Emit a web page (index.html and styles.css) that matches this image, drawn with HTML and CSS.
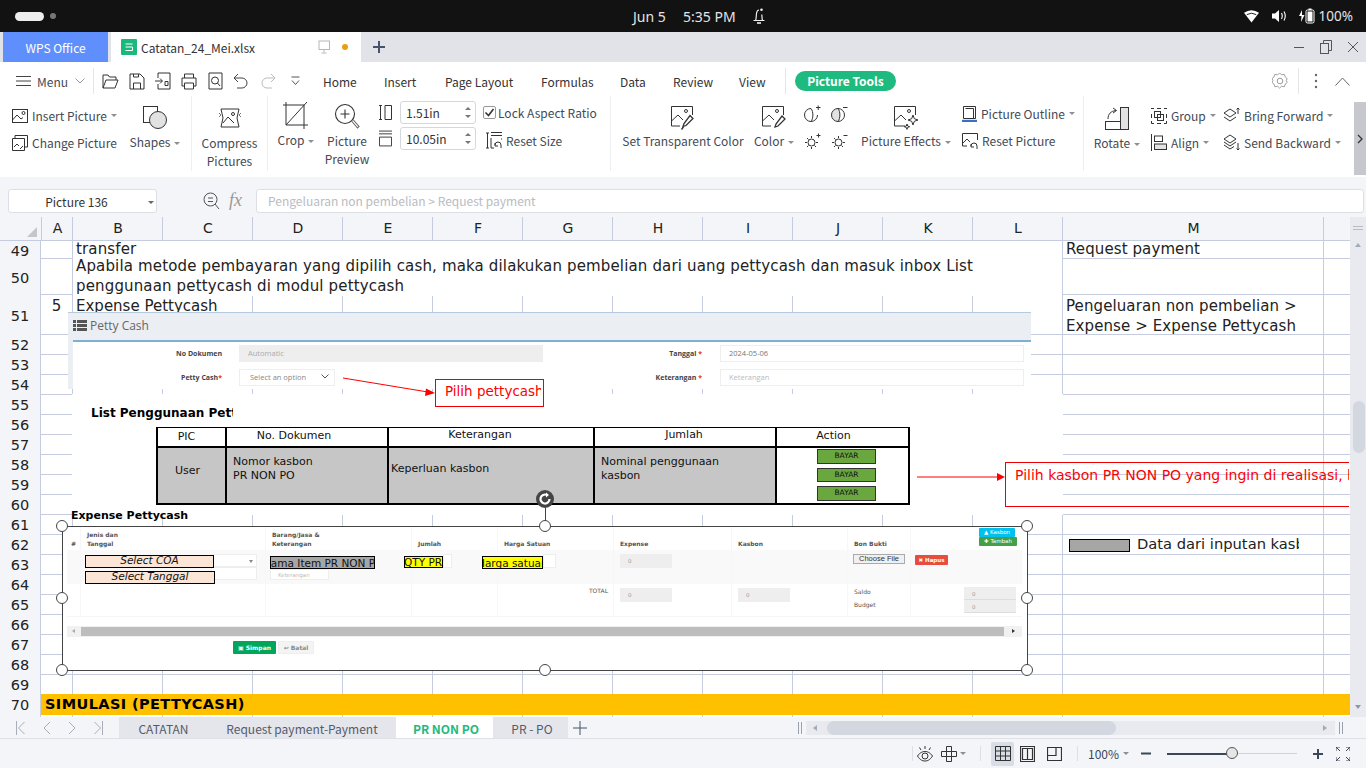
FILE: index.html
```html
<!DOCTYPE html>
<html lang="en">
<head>
    <meta charset="UTF-8">
    <title>Catatan_24_Mei.xlsx - WPS Office</title>
    <link rel="stylesheet" href="styles.css">
</head>
<body>
    <!-- System top bar -->
    <div class="topbar">
        <div class="top-left"><span class="pill"></span><span class="dot"></span></div>
        <span class="top-date">Jun 5</span>
        <span class="top-time">5:35 PM</span>
        <svg class="bell" width="14" height="18" viewBox="0 0 14 18" fill="none" stroke="#eee" stroke-width="1.2"><path d="M1.5 13.5h11M3.5 13.5c1-2 .6-4.5 1-7 .3-2 1.3-3.5 2.500-3.5M10.5 13.5c-.6-2-.5-4-.7-6"/><path d="M5 16h4" stroke-width="1.6"/><circle cx="9.5" cy="2.8" r="1.3" fill="#eee" stroke="none"/></svg>
        <div class="top-right">
            <svg width="15" height="14" viewBox="0 0 16 14"><path d="M0 3.5 Q8 -2 16 3.5 L8 14Z" fill="#fff"/><path d="M3 5.5 Q8 2.5 13 5.5" fill="none" stroke="#121212" stroke-width="1"/></svg>
            <svg class="t-vol" width="15" height="14" viewBox="0 0 15 14"><path d="M0 4.5h3L7 1v12L3 9.5H0z" fill="#fff"/><path d="M9.5 4q1.5 3 0 6M12 2.5q2.5 4.500 0 9" stroke="#fff" fill="none" stroke-width="1.1"/></svg>
            <svg class="t-bat" width="16" height="16" viewBox="0 0 16 16"><path d="M3 2 0 8h2.5L2 14l3.500-7H3z" fill="#fff"/><rect x="7" y="2" width="8" height="13" rx="1.5" fill="none" stroke="#fff"/><rect x="8.5" y="3.5" width="5" height="10" fill="#fff"/><rect x="9.5" y="0.5" width="3" height="1.5" fill="#fff"/></svg>
            <span>100%</span>
        </div>
    </div>

    <!-- App tabs -->
    <div class="apptabs">
        <div class="tab-wps">WPS Office</div>
        <div class="tab-doc">
            <svg width="16" height="16" viewBox="0 0 16 16"><rect width="16" height="16" rx="1" fill="#19b97e"/><path d="M4.5 5h7M4.5 8h7v3.5h-7" fill="none" stroke="#fff" stroke-width="1"/></svg>
            <span class="doc-name">Catatan_24_Mei.xlsx</span>
            <svg class="doc-mon" width="13" height="14" viewBox="0 0 13 14" fill="none" stroke="#b4b8c0"><rect x="1" y="1" width="10.5" height="8.5"/><path d="M6 9.5v3M3.5 13h5"/></svg>
            <span class="doc-dot"></span>
        </div>
        <svg class="tab-add" width="14" height="14" viewBox="0 0 14 14" stroke="#45526b" stroke-width="2"><path d="M7 1v12M1 7h12"/></svg>
        <div class="winctl">
            <svg width="12" height="12" viewBox="0 0 12 12" stroke="#555" fill="none"><path d="M1 6.5h10"/></svg>
            <svg width="12" height="14" viewBox="0 0 12 14" stroke="#555" fill="none"><rect x="0.5" y="3.5" width="8" height="10"/><path d="M3.5 3.5v-3h8v10h-3"/></svg>
            <svg width="12" height="12" viewBox="0 0 12 12" stroke="#555" fill="none"><path d="M1 1l10 10M11 1 1 11"/></svg>
        </div>
    </div>

    <!-- Menu row -->
    <div class="menurow">
        <svg class="m-burger" width="15" height="12" viewBox="0 0 15 12" stroke="#444" fill="none"><path d="M0 1.5h15M0 6h15M0 10.5h15"/></svg>
        <span class="m-label">Menu</span>
        <svg class="m-chev" width="10" height="6" viewBox="0 0 10 6" stroke="#999" fill="none"><path d="M.5.5 5 5 9.5.5"/></svg>
        <span class="m-sep"></span>
        <div class="quick">
            <svg width="17" height="17" viewBox="0 0 17 17" fill="none" stroke="#333"><path d="M1 15V2h5l1.5 2H14v3M1 15l3-8h12l-3 8z"/></svg>
            <svg width="16" height="17" viewBox="0 0 16 17" fill="none" stroke="#333"><path d="M1 1h10l4 4v11H1zM4.5 16v-6h7v6M4.5 1v3h5V1"/></svg>
            <svg width="16" height="18" viewBox="0 0 16 18" fill="none" stroke="#333"><path d="M3 1h12v16H3v-5M3 6V1M0 9h7M5 6.5 7.500 9 5 11.5M10 9.5h3v4h-3z"/></svg>
            <svg width="16" height="17" viewBox="0 0 16 17" fill="none" stroke="#333"><path d="M3.5 5V1h9v4M3.5 13H1V5h14v8h-2.5M3.5 10h9v6h-9z"/></svg>
            <svg class="q5" width="15" height="18" viewBox="0 0 15 18" fill="none" stroke="#333"><path d="M1 1h13v16H1z"/><circle cx="7" cy="8.5" r="3.5"/><path d="M9.5 11l2.5 3"/></svg>
            <svg width="15" height="16" viewBox="0 0 15 16" fill="none" stroke="#444"><path d="M5 1 1 5l4 4M1 5h8a5 5 0 0 1 0 10H4"/></svg>
            <svg class="q7" width="15" height="16" viewBox="0 0 15 16" fill="none" stroke="#bbb"><path d="M10 1l4 4-4 4M14 5H6a5 5 0 0 0 0 10h5"/></svg>
            <svg class="q8" width="9" height="10" viewBox="0 0 9 10" fill="none" stroke="#555"><path d="M.5 1h8M1 4.5l3.500 4 3.500-4"/></svg>
        </div>
        <nav class="mainmenu">
            <span class="mm-home">Home</span><span class="mm-insert">Insert</span><span class="mm-page">Page Layout</span><span class="mm-form">Formulas</span><span class="mm-data">Data</span><span class="mm-review">Review</span><span class="mm-view">View</span>
        </nav>
        <span class="m-sep2"></span>
        <span class="tools-pill">Picture Tools</span>
        <div class="menu-right">
            <svg width="16" height="18" viewBox="0 0 16 18" fill="none" stroke="#9a9a9a"><path d="M8 1l2 2 3-.5 1 2.900 2 1.600-1 2 1 2-2 1.600-1 2.900-3-.5-2 2-2-2-3 .5-1-2.900-2-1.600 1-2-1-2 2-1.600 1-2.900 3 .5z" transform="scale(.95)"/><circle cx="8" cy="9" r="2.8"/></svg>
            <span class="mr-sep"></span>
            <svg class="mr-dots" width="4" height="16" viewBox="0 0 4 16" fill="#666"><circle cx="2" cy="2" r="1.2"/><circle cx="2" cy="8" r="1.2"/><circle cx="2" cy="14" r="1.2"/></svg>
            <svg class="mr-up" width="15" height="9" viewBox="0 0 15 9" fill="none" stroke="#666"><path d="M.5 8.5 7.500 1l7 7.5"/></svg>
        </div>
    </div>

    <!-- Ribbon -->
    <div class="ribbon">
        <div class="rgroup g1">
            <div class="smalls">
                <div class="sbtn">
                    <svg width="16" height="14" viewBox="0 0 16 14" fill="none" stroke="#333"><rect x=".5" y=".5" width="15" height="13"/><path d="M.5 11 5 6l4 4 2-1.5"/><circle cx="11.5" cy="4" r="1.5"/></svg>
                    <span>Insert Picture</span><i class="caret"></i>
                </div>
                <div class="sbtn">
                    <svg width="16" height="16" viewBox="0 0 16 16" fill="none" stroke="#333"><path d="M3 3V.5h12.500V12H13M.5 3.500h12v12H.5zM2 12l3-3 2 2M8 14l3-3"/></svg>
                    <span>Change Picture</span>
                </div>
            </div>
            <div class="bigbtn shapes">
                <svg width="25" height="25" viewBox="0 0 25 25" fill="none" stroke="#333"><rect x=".5" y=".5" width="14" height="16" fill="#fff"/><circle cx="15" cy="14" r="8.5" fill="#e2e2e2"/></svg>
                <span>Shapes<i class="caret"></i></span>
            </div>
        </div>
        <div class="rgroup g2">
            <div class="bigbtn">
                <svg width="22" height="20" viewBox="0 0 22 20" fill="none" stroke="#333"><path d="M2 1h18l-2 9 2 9H2l2-9z"/><path d="M4 15 9 9l6 6" /><circle cx="14" cy="6" r="1.5"/><path d="M0 5l2 2-2 2M22 5l-2 2 2 2" stroke="#777"/></svg>
                <span>Compress<br>Pictures</span>
            </div>
        </div>
        <div class="rgroup g3">
            <div class="bigbtn crop">
                <svg width="26" height="30" viewBox="0 0 26 30" fill="none" stroke="#333"><path d="M3 4h18v20H3zM0 4h3M21 24h4M3 1v3M21 24v4M3 24 24 1"/></svg>
                <span>Crop<i class="caret"></i></span>
            </div>
            <div class="bigbtn preview">
                <svg width="26" height="28" viewBox="0 0 26 28" fill="none" stroke="#333" stroke-width="1.1"><circle cx="11" cy="11" r="9.5"/><path d="M11 6.5v9M6.5 11h9"/><path d="M17.5 18l6 7 1.500-1.500-6-7" stroke="#666"/></svg>
                <span>Picture<br>Preview</span>
            </div>
            <div class="sizes">
                <div class="size-row">
                    <svg width="13" height="15" viewBox="0 0 13 15" fill="none" stroke="#333"><path d="M0 .5h3M0 14.500h3M1.500 .5v14M6 .5h6.500v14H6z"/></svg>
                    <div class="spin"><span>1.51in</span><b class="spinner"><i class="up"></i><i class="down"></i></b></div>
                </div>
                <div class="size-row">
                    <svg width="14" height="17" viewBox="0 0 14 17" fill="none" stroke="#333"><path d="M0 .5h14M0 3.500h14M.5 7h13v9.500H.5z"/></svg>
                    <div class="spin"><span>10.05in</span><b class="spinner"><i class="up"></i><i class="down"></i></b></div>
                </div>
            </div>
            <div class="lock">
                <div class="lock-row">
                    <span class="check"><svg width="11" height="11" viewBox="0 0 11 11" fill="none" stroke="#333" stroke-width="1.6"><path d="M1.5 5.5 4.500 8.500 9.500 2"/></svg></span>
                    <span>Lock Aspect Ratio</span>
                </div>
                <div class="reset-row">
                    <svg width="16" height="17" viewBox="0 0 16 17" fill="none" stroke="#333"><path d="M0 1h3M0 16h3M1.500 1v15M5 .5h11M5 3.500h11M5 6v10h3M16 6v2"/><path d="M9 13a3 3 0 0 1 6 0v3M9 11v3h3" /></svg>
                    <span>Reset Size</span>
                </div>
            </div>
        </div>
        <div class="rgroup g4">
            <div class="bigbtn transp">
                <svg width="24" height="24" viewBox="0 0 24 24" fill="none" stroke="#333"><path d="M9 20H.5V.5h21V9"/><path d="M.5 15 7 9l5 5"/><circle cx="15" cy="5" r="1.5"/><path d="M19 9.500l3 3-7 7-3 1 1-3zM12.500 21l-2 2.500" stroke-width="1.3"/></svg>
                <span>Set Transparent Color</span>
            </div>
            <div class="bigbtn color">
                <svg width="24" height="24" viewBox="0 0 24 24" fill="none" stroke="#333"><path d="M9 20H.5V.5h21V9"/><path d="M.5 15 7 9l5 5"/><circle cx="15" cy="5" r="1.5"/><path d="M20 10l3 3-7 7-3 1 1-3z" stroke-width="1.3"/></svg>
                <span>Color<i class="caret"></i></span>
            </div>
            <div class="bright">
                <svg width="17" height="17" viewBox="0 0 17 17" fill="none" stroke="#333"><path d="M7 3.500a6.500 6.500 0 1 0 6.500 6.500"/><path d="M7 3.500c2.500 3 2.500 10 0 13"/><path d="M12 2.500h4.500M14.200 .5v4.500"/></svg>
                <svg width="17" height="17" viewBox="0 0 17 17" fill="none" stroke="#333"><path d="M7 3.500a6.500 6.500 0 0 0 0 13c2.500-3 2.500-10 0-13z" fill="#e2e2e2"/><path d="M7 3.500a6.500 6.500 0 0 1 6.500 6.500M13.500 10a6.500 6.500 0 0 1-6.500 6.500"/><path d="M12 2.500h4.500"/></svg>
                <svg width="17" height="17" viewBox="0 0 17 17" fill="none" stroke="#333"><circle cx="7.500" cy="9.500" r="3.500"/><path d="M7.500 3v2M7.500 14v2M1 9.500h2M12 9.500h2M3 5l1.500 1.500M3 14l1.500-1.500M12 14l-1.500-1.500M12.500 2.500h4M14.500 .5v4"/></svg>
                <svg width="17" height="17" viewBox="0 0 17 17" fill="none" stroke="#333"><circle cx="7.500" cy="9.500" r="3.500"/><path d="M7.500 3v2M7.500 14v2M1 9.500h2M12 9.500h2M3 5l1.500 1.500M3 14l1.500-1.500M12 14l-1.500-1.500M12.500 2.500h4"/></svg>
            </div>
            <div class="bigbtn effects">
                <svg width="24" height="24" viewBox="0 0 24 24" fill="none" stroke="#333"><path d="M11 20H.5V.5h21V9"/><path d="M.5 15 7 9l5 5"/><circle cx="15" cy="5" r="1.5"/><path d="M19 9l1.300 3.700L24 14l-3.700 1.300L19 19l-1.300-3.700L14 14l3.700-1.300zM13 18l.7 2 2 .7-2 .7-.7 2-.7-2-2-.7 2-.7z"/></svg>
                <span>Picture Effects<i class="caret"></i></span>
            </div>
            <div class="smalls outline">
                <div class="sbtn">
                    <svg width="15" height="16" viewBox="0 0 15 16" fill="none" stroke="#333"><path d="M1.500.5h12v12h-12zM3.500 2.500h8v10"/><path d="M0 15h15" stroke="#3a6fc8" stroke-width="2.4"/></svg>
                    <span>Picture Outline</span><i class="caret"></i>
                </div>
                <div class="sbtn">
                    <svg width="16" height="16" viewBox="0 0 16 16" fill="none" stroke="#333"><path d="M5 13H.5V.5h15V7"/><path d="M1 10l4-4 3 3M9 13a3 3 0 0 1 6 0v3M9 11v3h3" /></svg>
                    <span>Reset Picture</span>
                </div>
            </div>
        </div>
        <div class="rgroup g5">
            <div class="bigbtn rotate">
                <svg width="24" height="23" viewBox="0 0 24 23" fill="none" stroke="#333"><rect x=".5" y="14.5" width="15" height="8"/><rect x="15.5" y=".5" width="8" height="22" fill="#e2e2e2"/><path d="M3 12C3 7 6 4 11 3.500M8 1l3.500 2.500L8 6"/></svg>
                <span>Rotate<i class="caret"></i></span>
            </div>
            <div class="smalls arrange">
                <div class="sbtn">
                    <svg width="16" height="16" viewBox="0 0 16 16" fill="none" stroke="#333"><path d="M0 .5h3M6 .5h4M13 .5h3M.5 6v4M15.500 6v4M.5 13v2.500h2.500M13 15.500h2.500V13M6 15.500h4" /><rect x="3.500" y="3.500" width="6" height="6"/><rect x="6.500" y="6.500" width="6" height="6"/></svg>
                    <span>Group</span><i class="caret"></i>
                </div>
                <div class="sbtn">
                    <svg width="16" height="17" viewBox="0 0 16 17" fill="none" stroke="#333"><path d="M.5 0v17"/><rect x="3.500" y="2" width="8" height="5.5"/><rect x="3.500" y="10" width="12" height="5.5" fill="#e2e2e2"/></svg>
                    <span>Align</span><i class="caret"></i>
                </div>
            </div>
            <div class="smalls arrange2">
                <div class="sbtn">
                    <svg width="17" height="17" viewBox="0 0 17 17" fill="none" stroke="#333"><path d="M7 2 13 6l-6 4L1 6zM1 10l6 4 6-4M15 1v6M13.500 2.500 15 1l1.500 1.500"/></svg>
                    <span>Bring Forward</span><i class="caret"></i>
                </div>
                <div class="sbtn">
                    <svg width="17" height="17" viewBox="0 0 17 17" fill="none" stroke="#333"><path d="M7 1l6 4-6 4-6-4zM1 8l6 4 6-4M1 11l6 4 4-2.500M15 9v7M13.500 14.500 15 16l1.500-1.500"/></svg>
                    <span>Send Backward</span><i class="caret"></i>
                </div>
            </div>
        </div>
        <div class="ribbon-more"><svg width="6" height="10" viewBox="0 0 6 10" fill="none" stroke="#333" stroke-width="1.3"><path d="M1 1l4 4-4 4"/></svg></div>
    </div>

    <!-- Formula bar -->
    <div class="formulabar">
        <div class="namebox"><span>Picture 136</span><i class="caret dark"></i></div>
        <svg class="fb-zoom" width="17" height="18" viewBox="0 0 17 18" fill="none" stroke="#555"><circle cx="7.5" cy="7.5" r="6.5"/><path d="M5 6h5M5 9.500h5M12 12l4 5"/></svg>
        <span class="fx">fx</span>
        <div class="fb-input">Pengeluaran non pembelian &gt; Request payment</div>
    </div>

    <!-- Sheet -->
    <div class="sheetwrap">
        <div class="sheet">
            <div class="colhead">
                <span class="corner"></span><span>A</span><span>B</span><span>C</span><span>D</span><span>E</span><span>F</span><span>G</span><span>H</span><span>I</span><span>J</span><span>K</span><span>L</span><span>M</span><span></span>
            </div>
            <div class="row r18"><span class="rh">49</span><span class="merged">transfer</span><span class="mcol">Request payment</span></div>
            <div class="row r36"><span class="rh">50</span><span class="merged wrap"><span class="wrap-text">Apabila metode pembayaran yang dipilih cash, maka dilakukan pembelian dari uang pettycash dan masuk inbox List penggunaan pettycash di modul pettycash</span></span></div>
            <div class="row r40"><span class="rh">51</span><span class="acol">5</span><span class="merged2">Expense Pettycash</span><span class="mcol wrap">Pengeluaran non pembelian &gt; Expense &gt; Expense Pettycash</span></div>
            <div class="row"><span class="rh">52</span></div>
            <div class="row"><span class="rh">53</span></div>
            <div class="row"><span class="rh">54</span></div>
            <div class="row"><span class="rh">55</span></div>
            <div class="row"><span class="rh">56</span></div>
            <div class="row"><span class="rh">57</span></div>
            <div class="row"><span class="rh">58</span></div>
            <div class="row"><span class="rh">59</span></div>
            <div class="row"><span class="rh">60</span></div>
            <div class="row"><span class="rh">61</span></div>
            <div class="row"><span class="rh">62</span></div>
            <div class="row"><span class="rh">63</span></div>
            <div class="row"><span class="rh">64</span></div>
            <div class="row"><span class="rh">65</span></div>
            <div class="row"><span class="rh">66</span></div>
            <div class="row"><span class="rh">67</span></div>
            <div class="row"><span class="rh">68</span></div>
            <div class="row r69"><span class="rh">69</span></div>
            <div class="row r70"><span class="rh">70</span><span class="simulasi">SIMULASI (PETTYCASH)</span></div>
            <div class="row r71"><span class="rh"></span></div>
        </div>
        <div class="vscroll">
            <span class="vs-split"></span>
            <i class="vs-up"></i>
            <span class="vs-thumb"></span>
            <i class="vs-down"></i>
        </div>
    </div>

    <!-- Sheet tabs -->
    <div class="sheettabs">
        <div class="sheetnav">
            <svg width="10" height="14" viewBox="0 0 10 14" fill="none" stroke="#a8adb8"><path d="M.5 0v14M8.500 1 2.500 7l6 6"/></svg>
            <svg width="8" height="14" viewBox="0 0 8 14" fill="none" stroke="#a8adb8"><path d="M7 1 1 7l6 6"/></svg>
            <svg width="8" height="14" viewBox="0 0 8 14" fill="none" stroke="#a8adb8"><path d="M1 1l6 6-6 6"/></svg>
            <svg width="10" height="14" viewBox="0 0 10 14" fill="none" stroke="#a8adb8"><path d="M9.500 0v14M1.500 1l6 6-6 6"/></svg>
        </div>
        <div class="tablist">
            <span class="st st-cat">CATATAN</span><span class="st st-req">Request payment-Payment</span><span class="st st-active">PR NON PO</span><span class="st st-po">PR - PO</span>
        </div>
        <svg class="st-add" width="14" height="14" viewBox="0 0 14 14" stroke="#45526b"><path d="M7 0v14M0 7h14"/></svg>
        <span class="hs-mark first"></span>
        <div class="hscroll"><i class="hs-left"></i><span class="hs-thumb"></span><i class="hs-right"></i></div>
        <span class="hs-mark"></span>
    </div>

    <!-- Status bar -->
    <div class="statusbar">
        <span class="sb-sep"></span>
        <svg class="sb-eye" width="16" height="16" viewBox="0 0 16 16" fill="none" stroke="#333"><path d="M.5 10C3 6.500 5.500 5.500 8 5.500S13 6.500 15.500 10C13 14 10.500 15 8 15s-5-1-7.500-5z"/><circle cx="8" cy="10" r="3"/><path d="M8 0v3M2.500 1.500 4 4M13.500 1.500 12 4"/></svg>
        <svg class="sb-cross" width="16" height="16" viewBox="0 0 16 16" fill="none" stroke="#333"><path d="M5.500.5h5v5h5v5h-5v5h-5v-5h-5v-5h5zM5.500 5.500h5v5h-5z"/></svg>
        <i class="caret sb-caret"></i>
        <span class="sb-sep s2"></span>
        <span class="view-on"><svg width="16" height="15" viewBox="0 0 16 15" fill="none" stroke="#333"><path d="M.5.500h15v14H.5zM.5 5h15M.5 10h15M5.500.500v14M10.500.500v14"/></svg></span>
        <svg class="sb-page" width="15" height="16" viewBox="0 0 15 16" fill="none" stroke="#333" stroke-width="1.2"><path d="M.5.500h14v15H.5zM2.500 2.500h10v11h-10zM7.500 2.500v11"/></svg>
        <svg class="sb-break" width="15" height="14" viewBox="0 0 15 14" fill="none" stroke="#333" stroke-width="1.2"><path d="M.5.500h14v13H.5zM9 .5v8H.5"/></svg>
        <span class="sb-sep s3"></span>
        <span class="sb-zoom">100%</span><i class="caret sb-caret2"></i>
        <svg class="sb-minus" width="10" height="3" viewBox="0 0 10 3"><path d="M0 1.500h10" stroke="#3c4658" stroke-width="2"/></svg>
        <div class="slider"><span class="slider-on"></span><span class="slider-knob"></span></div>
        <svg class="sb-plus" width="10" height="10" viewBox="0 0 10 10" stroke="#3c4658" stroke-width="2"><path d="M5 0v10M0 5h10"/></svg>
        <svg class="sb-full" width="14" height="14" viewBox="0 0 14 14" fill="none" stroke="#3c4658"><path d="M0 4V0h4M0 0l4 4M10 0h4v4M14 0l-4 4M0 10v4h4M0 14l4-4M14 10v4h-4M14 14l-4-4"/></svg>
    </div>

    <!-- Pictures pasted on the sheet -->
    <div class="pic pettycash">
        <div class="pc-head">
            <svg width="14" height="11" viewBox="0 0 14 11" fill="#555"><path d="M0 0h3v3H0zM4 0h10v3H4zM0 4h3v3H0zM4 4h10v3H4zM0 8h3v3H0zM4 8h10v3H4z"/></svg>
            <span>Petty Cash</span>
        </div>
        <div class="pc-body">
            <div class="pc-side"></div>
            <div class="pc-form">
                <div class="pc-col">
                    <div class="pc-row"><label>No Dokumen</label><span class="pc-input off">Automatic</span></div>
                    <div class="pc-row"><label>Petty Cash<em>*</em></label><span class="pc-select">Select an option<svg width="8" height="5" viewBox="0 0 8 5" fill="none" stroke="#555"><path d="M.5.500 4 4 7.500.500"/></svg></span></div>
                </div>
                <div class="pc-col right">
                    <div class="pc-row"><label>Tanggal <em>*</em></label><span class="pc-input">2024-05-06</span></div>
                    <div class="pc-row"><label>Keterangan <em>*</em></label><span class="pc-input hint">Keterangan</span></div>
                </div>
            </div>
        </div>
    </div>

    <div class="pic listblock">
        <h3 class="list-title"><span>List Penggunaan Petty Cash</span></h3>
        <div class="list-table">
            <span class="lt-h h-pic">PIC</span><span class="lt-h h-doc">No. Dokumen</span><span class="lt-h h-ket">Keterangan</span><span class="lt-h h-jml">Jumlah</span><span class="lt-h h-act">Action</span>
            <span class="lt-c c-user">User</span><span class="lt-c">Nomor kasbon<br>PR NON PO</span><span class="lt-c c-ket">Keperluan kasbon</span><span class="lt-c">Nominal penggunaan<br>kasbon</span>
            <span class="lt-act"><b class="bayar">BAYAR</b><b class="bayar">BAYAR</b><b class="bayar">BAYAR</b></span>
        </div>
    </div>

    <svg class="pic arrows" width="1366" height="768" viewBox="0 0 1366 768" fill="none">
        <path d="M343 378 428 392" stroke="#f00"/>
        <path d="M435 393 426 388.500 425 396z" fill="#f00"/>
        <path d="M917 477H998" stroke="#f00"/>
        <path d="M1005 477 997 473v8z" fill="#f00"/>
    </svg>
    <div class="pic note-petty"><span>Pilih pettycash</span></div>
    <div class="pic note-kasbon"><div class="note-inner">Pilih kasbon PR NON PO yang ingin di realisasi, lalu klik tombol bayar</div></div>
    <div class="pic legend"><span class="legend-swatch"></span><span class="legend-text">Data dari inputan kasbon</span></div>

    <div class="pic exp-title">Expense Pettycash</div>
    <div class="pic expense">
        <div class="ex-table">
            <div class="ex-row ex-head">
                <span class="c0">#</span><span>Jenis dan<br>Tanggal</span><span>Barang/Jasa &amp;<br>Keterangan</span><span>Jumlah</span><span>Harga Satuan</span><span>Expense</span><span>Kasbon</span><span>Bon Bukti</span>
                <span class="ex-adds"><b class="btn-kasbon">▲ Kasbon</b><b class="btn-tambah">✚ Tambah</b></span>
            </div>
            <div class="ex-row ex-item">
                <span></span>
                <span class="ex-coa"><i class="inp sel"></i><i class="inp sel2"></i></span>
                <span class="ex-brg"><i class="inp ket">Keterangan</i></span>
                <span class="ex-qty"><i class="inp"></i></span>
                <span class="ex-hrg"><i class="inp"></i></span>
                <span><i class="inp off">0</i></span>
                <span></span>
                <span class="ex-file"><b class="choose">Choose File</b></span>
                <span class="ex-del"><b class="hapus">✖ Hapus</b></span>
            </div>
            <div class="ex-row ex-total">
                <span></span><span></span><span></span><span></span>
                <span class="total-lbl">TOTAL</span>
                <span><i class="inp off">0</i></span>
                <span><i class="inp off">0</i></span>
                <span class="ex-saldo">Saldo<br>Budget</span>
                <span class="ex-sum"><i class="inp off">0</i><i class="inp off">0</i></span>
            </div>
        </div>
        <div class="ex-scroll"><i class="es-l"></i><span class="es-thumb"></span><i class="es-r"></i></div>
        <div class="ex-actions"><b class="simpan">▣ Simpan</b><b class="batal">↩ Batal</b></div>

        <span class="mark coa">Select COA</span>
        <span class="mark tgl">Select Tanggal</span>
        <span class="mark item"><span>Nama Item PR NON PO</span></span>
        <span class="mark qty"><span>QTY PR</span></span>
        <span class="mark harga"><span>Harga satuan</span></span>

        <span class="handle h-tl"></span><span class="handle h-tc"></span><span class="handle h-tr"></span>
        <span class="handle h-ml"></span><span class="handle h-mr"></span>
        <span class="handle h-bl"></span><span class="handle h-bc"></span><span class="handle h-br"></span>
        <span class="rot-line"></span>
        <span class="rot-handle"><svg width="14" height="14" viewBox="0 0 14 14" fill="none" stroke="#fff" stroke-width="2.2"><path d="M11.500 7A4.500 4.500 0 1 1 9 3"/><path d="M8 .5 11 3 8 5.500z" fill="#fff" stroke="none"/></svg></span>
    </div>
</body>
</html>
```

FILE: styles.css
```css
/* Page */
* {
    box-sizing: border-box;
}

body {
    margin: 0;
    width: 1366px;
    height: 768px;
    overflow: hidden;
    background-color: #f3f5f8;
    font-family: "Noto Sans CJK SC", "Noto Sans", sans-serif;
    font-size: 12px;
    color: #444a55;
}

svg {
    display: block;
    flex: none;
}

i, em {
    font-style: normal;
}

.caret {
    display: inline-block;
    width: 0;
    height: 0;
    margin-left: 4px;
    border-left: 3px solid transparent;
    border-right: 3px solid transparent;
    border-top: 3px solid #8a8f98;
    vertical-align: middle;
}

.caret.dark {
    border-top-color: #666;
}

/* System top bar */
.topbar {
    height: 32px;
    background-color: #121212;
    color: #e4e4e4;
    display: flex;
    align-items: center;
    font-family: "Noto Sans", sans-serif;
    font-size: 14px;
}

.top-left {
    width: 633px;
    padding-left: 15px;
    display: flex;
    align-items: center;
    gap: 6px;
}

.pill {
    width: 29px;
    height: 9px;
    border-radius: 5px;
    background-color: #eee;
}

.dot {
    width: 6px;
    height: 6px;
    border-radius: 50%;
    background-color: #777;
}

.top-date {
    width: 50px;
}

.top-time {
    width: 69px;
}

.top-right {
    margin-left: auto;
    display: flex;
    align-items: center;
    padding-right: 13px;
    font-size: 13.5px;
}

.t-vol {
    margin-left: 13px;
}

.t-bat {
    margin: 0 4px 0 12px;
}

/* App tabs */
.apptabs {
    height: 30px;
    background-color: #e1e3e8;
    display: flex;
    align-items: center;
    padding-left: 3px;
}

.tab-wps {
    width: 105px;
    height: 30px;
    line-height: 32px;
    text-align: center;
    background-color: #5f8ffc;
    color: #fff;
}

.tab-doc {
    width: 250px;
    height: 30px;
    margin-left: 3px;
    background-color: #fff;
    display: flex;
    align-items: center;
    padding-left: 10px;
    color: #333;
}

.doc-name {
    width: 177px;
    margin-left: 4px;
    padding-top: 1px;
}

.doc-dot {
    width: 6px;
    height: 6px;
    margin-left: 11px;
    border-radius: 50%;
    background-color: #e8a010;
}

.tab-add {
    margin-left: 11px;
}

.winctl {
    margin-left: auto;
    display: flex;
    align-items: center;
    gap: 15px;
    padding-right: 7px;
}

/* Menu row */
.menurow {
    height: 34px;
    padding-top: 4px;
    background-color: #fff;
    display: flex;
    align-items: center;
    padding-left: 16px;
    position: relative;
}

.m-label {
    margin-left: 6px;
    width: 36px;
}

.m-chev {
    margin-left: 2px;
}

.m-sep {
    width: 1px;
    height: 26px;
    margin-left: 8px;
    background-color: #e4e6ea;
}

.quick {
    display: flex;
    align-items: center;
    width: 200px;
    margin-left: 8px;
    gap: 10px;
}

.q5 {
    margin-left: 1px;
}

.q7 {
    margin-left: 3px;
}

.q8 {
    margin-left: 5px;
}

.mainmenu {
    display: flex;
    margin-left: 21px;
    color: #333;
}

.mm-home { width: 61px; }
.mm-insert { width: 61px; }
.mm-page { width: 96px; }
.mm-form { width: 79px; }
.mm-data { width: 53px; }
.mm-review { width: 66px; }
.mm-view { width: 46px; }

.m-sep2 {
    width: 1px;
    height: 26px;
    background-color: #e4e6ea;
}

.tools-pill {
    margin-left: 9px;
    width: 101px;
    height: 20px;
    line-height: 19px;
    border-radius: 10px;
    text-align: center;
    background-color: #1fba7f;
    color: #fff;
    font-weight: 700;
}

.menu-right {
    margin-left: auto;
    display: flex;
    align-items: center;
    padding-right: 16px;
}

.mr-sep {
    width: 1px;
    height: 26px;
    margin: 0 15px 0 10px;
    background-color: #e4e6ea;
}

.mr-up {
    margin-left: 17px;
}

/* Ribbon */
.ribbon {
    height: 81px;
    background-color: #fff;
    display: flex;
    color: #444a55;
}

.rgroup {
    height: 75px;
    display: flex;
    flex: none;
    border-right: 1px solid #eceef1;
}

.g1 { width: 192px; padding-left: 12px; }
.g2 { width: 76px; }
.g3 { width: 343px; }
.g4 { width: 473px; }
.g5 { width: 265px; border-right: none; }

.smalls {
    display: flex;
    flex-direction: column;
    padding-top: 6px;
}

.sbtn {
    height: 27px;
    display: flex;
    align-items: center;
    white-space: nowrap;
}

.sbtn span {
    margin-left: 4px;
}

.bigbtn {
    display: flex;
    flex-direction: column;
    align-items: center;
    text-align: center;
    line-height: 18px;
    white-space: nowrap;
}

.bigbtn svg {
    margin-top: 10px;
    margin-bottom: 2px;
}

.g1 .smalls {
    width: 132px;
}

.shapes {
    width: 40px;
    margin-left: -9px;
}

.shapes svg {
    margin-bottom: 2px;
}

.g2 .bigbtn {
    width: 76px;
}

.g2 .bigbtn svg {
    margin-top: 12px;
    margin-bottom: 6px;
}

.crop {
    width: 50px;
    margin-left: 3px;
}

.crop svg {
    margin-top: 5px;
    margin-bottom: 0;
}

.preview {
    width: 50px;
    margin-left: 1px;
}

.preview svg {
    margin-top: 7px;
    margin-bottom: 1px;
}

.sizes {
    display: flex;
    flex-direction: column;
    margin-left: 7px;
    padding-top: 5px;
    gap: 3px;
}

.size-row {
    display: flex;
    align-items: center;
    height: 23px;
    width: 97px;
    gap: 8px;
}

.size-row svg {
    width: 13px;
}

.spin {
    width: 76px;
    height: 23px;
    border: 1px solid #d4d7dc;
    border-radius: 3px;
    display: flex;
    align-items: center;
    justify-content: space-between;
    padding: 0 4px 0 5px;
    color: #333;
}

.spinner {
    display: flex;
    flex-direction: column;
    gap: 5px;
}

.spinner i {
    width: 0;
    height: 0;
    border-left: 3px solid transparent;
    border-right: 3px solid transparent;
}

.spinner .up {
    border-bottom: 3px solid #777;
}

.spinner .down {
    border-top: 3px solid #777;
}

.lock {
    margin-left: 7px;
    padding-top: 6px;
}

.lock-row {
    height: 21px;
    display: flex;
    align-items: center;
    white-space: nowrap;
}

.lock-row span:last-child {
    margin-left: 2px;
}

.check {
    width: 13px;
    height: 13px;
    border: 1px solid #999;
    border-radius: 2px;
    display: flex;
    align-items: center;
    justify-content: center;
}

.reset-row {
    margin-top: 5px;
    margin-left: 3px;
    height: 24px;
    display: flex;
    align-items: center;
    gap: 4px;
}

.transp {
    width: 122px;
    margin-left: 11px;
}

.color {
    width: 38px;
    margin-left: 11px;
}

.bright {
    width: 54px;
    margin-left: 11px;
    display: grid;
    grid-template-columns: 27px 27px;
    grid-auto-rows: 28px;
    padding-top: 3px;
    align-items: center;
}

.effects {
    width: 92px;
    margin-left: 2px;
}

.outline {
    margin-left: 10px;
    padding-top: 4px;
}

.outline .sbtn {
    height: 27px;
}

.rotate {
    width: 50px;
    margin-left: 8px;
}

.rotate svg {
    margin-top: 11px;
    margin-bottom: 4px;
}

.arrange {
    margin-left: 9px;
    width: 73px;
}

.arrange2 {
    margin-left: -1px;
}

.ribbon-more {
    width: 12px;
    height: 73px;
    margin: 6px 0 0 5px;
    background-color: #c6c8cd;
    display: flex;
    align-items: center;
    justify-content: center;
}

/* Formula bar */
.formulabar {
    height: 40px;
    display: flex;
    align-items: flex-start;
    padding: 12px 2px 0 8px;
    background-color: #f3f5f8;
}

.namebox {
    width: 149px;
    height: 24px;
    border: 1px solid #dcdfe4;
    border-radius: 3px;
    background-color: #fff;
    display: flex;
    align-items: center;
    justify-content: center;
    padding-right: 12px;
    position: relative;
    color: #333;
}

.namebox .caret {
    position: absolute;
    right: 2px;
    top: 11px;
}

.fb-zoom {
    margin: 3px 0 0 46px;
}

.fx {
    width: 27px;
    margin-left: 9px;
    color: #999;
    font-family: "Liberation Serif", serif;
    font-style: italic;
    font-size: 18px;
    line-height: 22px;
}

.fb-input {
    flex: 1;
    height: 24px;
    line-height: 22px;
    border: 1px solid #dcdfe4;
    border-radius: 3px;
    background-color: #fff;
    padding-left: 11px;
    color: #b9bcc2;
}

/* Sheet grid */
.sheetwrap {
    height: 500px;
    display: flex;
    font-family: "DejaVu Sans", sans-serif;
    font-size: 15px;
    color: #222;
}

.sheet {
    width: 1350px;
    height: 500px;
    overflow: hidden;
}

.colhead,
.row {
    display: grid;
    grid-template-columns: 41px 31px repeat(11, 90px) 261px 27px;
}

.colhead {
    height: 24px;
    border-bottom: 1px solid #c5cce0;
    background-color: #f3f5f8;
    font-size: 14px;
    line-height: 23px;
}

.colhead span {
    text-align: center;
    padding-left: 1px;
    border-left: 1px solid #c5cce0;
}

.colhead .corner {
    border-left: none;
    position: relative;
}

.corner::after {
    content: "";
    position: absolute;
    right: 4px;
    bottom: 3px;
    border-left: 10px solid transparent;
    border-bottom: 10px solid #c4c6ca;
}

.row {
    height: 20px;
    border-bottom: 1px solid #c5cce0;
    background-color: #fff;
    background-image:
        repeating-linear-gradient(90deg, transparent 0 89px, #c5cce0 89px 90px),
        linear-gradient(#c5cce0, #c5cce0),
        linear-gradient(#c5cce0, #c5cce0);
    background-repeat: no-repeat;
    background-size: 990px 100%, 1px 100%, 1px 100%;
    background-position: 73px 0, 72px 0, 1323px 0;
    line-height: 20px;
    white-space: nowrap;
}

.rh {
    grid-column: 1;
    background-color: #f3f5f8;
    border-right: 1px solid #c5cce0;
    border-bottom: 1px solid #c5cce0;
    margin-bottom: -1px;
    text-align: center;
    font-size: 14.5px;
    display: flex;
    align-items: center;
    justify-content: center;
}

.r18 { height: 18px; }
.r36 { height: 36px; }
.r40 { height: 40px; }
.r69 { height: 19px; border-bottom: none; }
.r71 { height: 3px; }

.merged {
    grid-column: 3 / 14;
    margin-left: 1px;
    padding-left: 3px;
    background-color: #fff;
    height: 100%;
    letter-spacing: 0.15px;
}

.r18 .merged,
.r18 .mcol {
    line-height: 16px;
}

.merged.wrap {
    white-space: normal;
    padding-right: 60px;
}

.wrap-text {
    display: block;
    margin-top: -3px;
}

.acol {
    grid-column: 2;
    text-align: center;
    padding-top: 1px;
}

.merged2 {
    grid-column: 3 / 5;
    margin-left: 1px;
    padding-left: 3px;
    padding-top: 1px;
    background-color: #fff;
    margin-right: 1px;
}

.mcol {
    grid-column: 14;
    padding-left: 3px;
    margin-left: 1px;
    letter-spacing: 0.1px;
}

.mcol.wrap {
    white-space: normal;
    padding-right: 14px;
    padding-top: 1px;
}

.r70 {
    height: 21px;
    border-bottom: none;
    background-image: none;
    background-color: #ffc000;
}

.r70 .rh {
    border-bottom: none;
    margin-bottom: 0;
}

.simulasi {
    grid-column: 2 / -1;
    padding-left: 4px;
    font-weight: 700;
    color: #000;
    font-size: 14.5px;
    letter-spacing: 0.4px;
}

.vscroll {
    width: 16px;
    height: 500px;
    background-color: #e8eaef;
    position: relative;
}

.vs-split {
    display: block;
    position: absolute;
    left: 3px;
    top: 9px;
    width: 10px;
    height: 4px;
    border-top: 1px solid #b7bcc6;
    border-bottom: 1px solid #b7bcc6;
}

.vs-up,
.vs-down {
    position: absolute;
    left: 5px;
    border-left: 3px solid transparent;
    border-right: 3px solid transparent;
}

.vs-up {
    top: 26px;
    border-bottom: 4px solid #a4abb8;
}

.vs-down {
    top: 488px;
    border-top: 4px solid #8f97a6;
}

.vs-thumb {
    position: absolute;
    left: 3px;
    top: 184px;
    width: 12px;
    height: 52px;
    border-radius: 6px;
    background-color: #d3d7e0;
}

/* Sheet tabs */
.sheettabs {
    height: 22px;
    border-bottom: 1px solid #dfe1e6;
    background-color: #f3f5f8;
    display: flex;
    align-items: center;
    position: relative;
}

.sheetnav {
    width: 119px;
    display: flex;
    align-items: center;
    padding-left: 16px;
    gap: 17px;
}

.tablist {
    display: flex;
    height: 21px;
    background-color: #e4e6ec;
    line-height: 23px;
    color: #555b6b;
}

.st {
    text-align: center;
}

.st-cat { width: 89px; }
.st-req { width: 188px; }
.st-active { width: 97px; padding-left: 3px; background-color: #fff; color: #1fba7f; font-weight: 700; }
.st-po { width: 75px; padding-left: 3px; }

.st-add {
    margin-left: 5px;
}

.hs-mark {
    width: 4px;
    height: 12px;
    border-left: 1px solid #9aa0ad;
    border-right: 1px solid #9aa0ad;
    margin-left: 4px;
}

.hs-mark.first {
    margin-left: 211px;
}

.hscroll {
    width: 529px;
    height: 14px;
    margin-left: 4px;
    background-color: #e8eaef;
    position: relative;
}

.hs-thumb {
    position: absolute;
    left: 21px;
    top: 0;
    width: 289px;
    height: 14px;
    border-radius: 7px;
    background-color: #d3d7e0;
}

.hs-left,
.hs-right {
    position: absolute;
    top: 4px;
    border-top: 3px solid transparent;
    border-bottom: 3px solid transparent;
}

.hs-left {
    left: 7px;
    border-right: 4px solid #a4abb8;
}

.hs-right {
    right: 8px;
    border-left: 4px solid #a4abb8;
}

/* Status bar */
.statusbar {
    height: 29px;
    display: flex;
    align-items: center;
    padding-left: 912px;
    background-color: #f3f5f8;
}

.sb-sep {
    width: 1px;
    height: 15px;
    background-color: #dcdfe4;
}

.sb-eye {
    margin-left: 4px;
}

.sb-cross {
    margin-left: 8px;
}

.sb-caret {
    margin-left: 3px;
}

.sb-sep.s2 {
    margin-left: 14px;
}

.view-on {
    width: 23px;
    height: 24px;
    margin-left: 10px;
    border-radius: 2px;
    background-color: #d8dde6;
    display: flex;
    align-items: center;
    justify-content: center;
}

.sb-page {
    margin-left: 6px;
}

.sb-break {
    margin-left: 12px;
}

.sb-sep.s3 {
    margin-left: 15px;
}

.sb-zoom {
    margin-left: 10px;
    width: 32px;
    color: #3c4658;
}

.sb-caret2 {
    margin-left: 3px;
}

.sb-minus {
    margin-left: 12px;
}

.slider {
    width: 130px;
    height: 1px;
    margin-left: 16px;
    background-color: #cfd3db;
    position: relative;
}

.slider-on {
    position: absolute;
    left: 0;
    top: -.5px;
    width: 65px;
    height: 2px;
    background-color: #3c4658;
}

.slider-knob {
    position: absolute;
    left: 59px;
    top: -6px;
    width: 12px;
    height: 12px;
    border-radius: 50%;
    border: 1px solid #555;
    background-color: #e6e6e6;
}

.sb-plus {
    margin-left: 16px;
}

.sb-full {
    margin-left: 13px;
}

/* Pictures on the sheet, placed at their spot on the canvas */
.pic {
    position: absolute;
}

.arrows {
    left: 0;
    top: 0;
    z-index: 3;
    pointer-events: none;
}

.pettycash {
    left: 68px;
    top: 312px;
    width: 963px;
    height: 77px;
    font-family: "Open Sans", sans-serif;
}

.pc-head {
    height: 28px;
    background-color: #ebeef3;
    border-top: 1px solid #b5cbdd;
    padding-left: 5px;
    display: flex;
    align-items: center;
    gap: 3px;
    font-size: 12px;
    color: #666;
    padding-bottom: 2px;
}

.pc-body {
    display: flex;
    height: 49px;
}

.pc-side {
    width: 5px;
    background-color: #ebeef3;
}

.pc-form {
    flex: 1;
    background-color: #fff;
    border-top: 2px solid #7eb0d3;
    display: flex;
    padding-top: 3px;
    font-size: 7.5px;
}

.pc-col {
    width: 475px;
}

.pc-col.right {
    width: 476px;
}

.pc-row {
    display: flex;
    align-items: center;
    height: 17px;
    margin-bottom: 7px;
}

.pc-row label {
    width: 149px;
    text-align: right;
    font-size: 7px;
    font-weight: 700;
    color: #444;
    margin-right: 17px;
}

.pc-col.right .pc-row label {
    width: 154px;
    margin-right: 18px;
}

.pc-row em {
    color: #e33;
}

.pc-input {
    width: 304px;
    height: 17px;
    line-height: 15px;
    padding-left: 8px;
    border: 1px solid #eee;
    color: #777;
}

.pc-input.off {
    background-color: #eee;
    color: #aaa;
}

.pc-input.hint {
    color: #bbb;
}

.pc-select {
    width: 96px;
    height: 17px;
    padding: 0 5px 2px 10px;
    border: 1px solid #eee;
    display: flex;
    align-items: center;
    justify-content: space-between;
    color: #888;
    font-size: 7.5px;
}

.listblock {
    left: 72px;
    top: 394px;
    width: 991px;
    height: 121px;
    background-color: #fff;
    font-family: "DejaVu Sans", sans-serif;
    color: #111;
}

.list-title {
    margin: 0;
    position: absolute;
    left: 19px;
    top: 11px;
    width: 142px;
    overflow: hidden;
    white-space: nowrap;
    font-size: 12px;
    line-height: 16px;
    color: #000;
}

.list-table {
    position: absolute;
    left: 84px;
    top: 33px;
    width: 754px;
    height: 78px;
    border: 2px solid #000;
    border-top-width: 1px;
    display: grid;
    grid-template-columns: 69px 162px 206px 182px 1fr;
    grid-template-rows: 20px 1fr;
    font-size: 11px;
    line-height: 14px;
}

.lt-h {
    border-bottom: 2px solid #000;
    border-right: 2px solid #000;
    text-align: center;
    padding-top: 1px;
}

.h-pic {
    padding-right: 10px;
    padding-top: 2px;
}

.h-doc {
    padding-right: 26px;
}

.h-ket {
    padding-top: 0;
    padding-right: 22px;
}

.h-jml {
    padding-top: 0;
    padding-right: 2px;
}

.h-act {
    border-right: none;
    padding-right: 18px;
}

.lt-c {
    background-color: #c6c6c6;
    border-right: 2px solid #000;
    padding: 7px 0 0 6px;
}

.c-user {
    padding: 16px 0 0 17px;
}

.c-ket {
    padding: 14px 0 0 2px;
}

.lt-act {
    display: flex;
    flex-direction: column;
    align-items: center;
    gap: 4px;
    padding: 1px 0 0 8px;
}

.bayar {
    width: 59px;
    height: 14.5px;
    border: 1px solid #333;
    background-color: #6aa83f;
    text-align: center;
    font-weight: 400;
    font-size: 7.5px;
    line-height: 12px;
}

.note-petty {
    left: 435px;
    top: 379px;
    width: 109px;
    height: 28px;
    border: 1px solid #e00;
    background-color: #fff;
    padding-left: 9px;
    overflow: hidden;
    white-space: nowrap;
    font-family: "DejaVu Sans", sans-serif;
    font-size: 13.5px;
    line-height: 22px;
    color: #f00;
    z-index: 2;
}

.note-petty span {
    display: block;
    width: 96px;
    overflow: hidden;
}

.note-kasbon {
    left: 1005px;
    top: 462px;
    width: 344px;
    height: 45px;
    overflow: hidden;
    z-index: 2;
}

.note-inner {
    width: 600px;
    height: 45px;
    border: 1px solid #e00;
    padding-left: 9px;
    white-space: nowrap;
    font-family: "DejaVu Sans", sans-serif;
    font-size: 14px;
    line-height: 24px;
    color: #f00;
}

.legend {
    left: 1069px;
    top: 534px;
    width: 230px;
    height: 20px;
    overflow: hidden;
    display: flex;
    align-items: center;
    white-space: nowrap;
    font-family: "DejaVu Sans", sans-serif;
    font-size: 14.7px;
    color: #222;
}

.legend-swatch {
    width: 61px;
    height: 13px;
    margin-top: 2px;
    border: 1px solid #000;
    background-color: #a6a6a6;
    flex: none;
}

.legend-text {
    margin-left: 7px;
    margin-top: -2px;
}

.exp-title {
    left: 71px;
    top: 508px;
    font-family: "DejaVu Sans", sans-serif;
    font-weight: 700;
    font-size: 11px;
    line-height: 15px;
    color: #000;
    z-index: 1;
}

/* Selected picture with the expense table */
.expense {
    left: 62px;
    top: 526px;
    width: 966px;
    height: 145px;
    background-color: #fff;
    border: 1px solid #444;
    font-family: "DejaVu Sans", sans-serif;
    font-size: 6px;
    color: #555;
}

.ex-table {
    position: absolute;
    left: 4px;
    top: 0;
    width: 955px;
}

.ex-row {
    display: grid;
    grid-template-columns: 14px 185px 146px 86px 116px 118px 116px 63px 111px;
}

.ex-row > span {
    border-right: 1px solid #f7f7f7;
    padding-left: 6px;
    position: relative;
}

.ex-head {
    height: 23px;
    font-weight: 700;
    line-height: 9px;
}

.ex-head > span {
    padding-top: 3px;
}

.ex-head > span:nth-child(n+4) {
    padding-top: 12px;
}

.ex-head .c0 {
    padding: 12px 0 0 4px;
}

.ex-head .ex-adds {
    padding: 0;
    border-right: 0;
}

.btn-kasbon,
.btn-tambah {
    position: absolute;
    left: 68px;
    height: 9px;
    border-radius: 1px;
    color: #fff;
    font-size: 5.5px;
    font-weight: 400;
    line-height: 9px;
    text-align: center;
    white-space: nowrap;
    overflow: hidden;
}

.btn-kasbon {
    top: 1px;
    width: 36px;
    background-color: #00c0ef;
}

.btn-tambah {
    top: 10px;
    width: 38px;
    background-color: #43a047;
}

.ex-item {
    height: 34px;
    background-color: #f9f9f9;
}

.ex-total {
    height: 33px;
    border-bottom: 1px solid #f5f5f5;
}

.inp {
    display: block;
    height: 14px;
    background-color: #fff;
    border: 1px solid #eee;
    font-size: 5.5px;
    line-height: 13px;
    padding-left: 7px;
}

.inp.off {
    width: 52px;
    margin-top: 4px;
    background-color: #eee;
    color: #999;
}

.ex-coa .sel {
    position: absolute;
    left: 130px;
    top: 4px;
    width: 46px;
    height: 13px;
}

.ex-coa .sel::after {
    content: "";
    position: absolute;
    right: 3px;
    top: 5px;
    border-left: 2px solid transparent;
    border-right: 2px solid transparent;
    border-top: 3px solid #888;
}

.ex-coa .sel2 {
    position: absolute;
    left: 130px;
    top: 17px;
    width: 46px;
    height: 13px;
}

.ex-brg .ket {
    position: absolute;
    left: 4px;
    top: 19px;
    width: 59px;
    height: 11px;
    color: #bbb;
    line-height: 10px;
}

.ex-qty .inp {
    position: absolute;
    left: 31px;
    top: 4px;
    width: 8px;
}

.ex-hrg .inp {
    position: absolute;
    left: 45px;
    top: 4px;
    width: 13px;
}

.ex-file .choose {
    position: absolute;
    left: 5px;
    top: 4px;
    width: 52px;
    height: 10px;
    border: 1px solid #aaa;
    background-color: #f0f0f0;
    font-family: "Liberation Sans", sans-serif;
    font-weight: 400;
    font-size: 7.5px;
    line-height: 8px;
    text-align: center;
    color: #333;
}

.ex-del .hapus {
    position: absolute;
    left: 4px;
    top: 5px;
    width: 33px;
    height: 10px;
    border-radius: 1px;
    background-color: #e74c3c;
    color: #fff;
    font-size: 5.5px;
    line-height: 10px;
    text-align: center;
}

.total-lbl {
    text-align: right;
    padding: 3px 5px 0 0 !important;
}

.ex-saldo {
    line-height: 13px;
    padding-top: 1px;
}

.ex-sum {
    padding-left: 53px !important;
    border-right: 0 !important;
}

.ex-sum .inp.off {
    margin: 0;
    height: 13px;
    border-bottom-color: #ddd;
}

.ex-sum .inp.off:first-child {
    margin-top: 3px;
}

.ex-scroll {
    position: absolute;
    left: 4px;
    top: 99px;
    width: 955px;
    height: 11px;
    background-color: #f1f1f1;
}

.es-thumb {
    position: absolute;
    left: 14px;
    top: 1px;
    width: 923px;
    height: 9px;
    background-color: #bdbdbd;
}

.es-l,
.es-r {
    position: absolute;
    top: 3px;
    border-top: 2.5px solid transparent;
    border-bottom: 2.5px solid transparent;
}

.es-l {
    left: 5px;
    border-right: 3px solid #aaa;
}

.es-r {
    left: 945px;
    border-left: 3px solid #333;
}

.ex-actions {
    position: absolute;
    left: 170px;
    top: 114px;
    display: flex;
    gap: 2px;
}

.simpan,
.batal {
    height: 13px;
    line-height: 13px;
    border-radius: 1px;
    text-align: center;
    font-size: 6px;
}

.simpan {
    width: 43px;
    background-color: #00a65a;
    color: #fff;
}

.batal {
    width: 36px;
    background-color: #f4f4f4;
    border: 1px solid #eee;
    color: #888;
    line-height: 11px;
}

/* Annotations on top of the table */
.mark {
    position: absolute;
    border: 1px solid #000;
    overflow: hidden;
    white-space: nowrap;
    font-family: "DejaVu Sans", sans-serif;
    font-size: 10.5px;
    color: #111;
}

.mark span {
    display: block;
}

.coa {
    left: 22px;
    top: 28px;
    width: 129px;
    height: 13px;
    line-height: 9px;
    background-color: #fbe5d6;
    font-style: italic;
    text-align: center;
}

.tgl {
    left: 22px;
    top: 44px;
    width: 130px;
    height: 13px;
    line-height: 9px;
    background-color: #fbe5d6;
    font-style: italic;
    text-align: center;
}

.item {
    left: 207px;
    top: 29px;
    width: 105px;
    height: 13px;
    line-height: 12px;
    background-color: #a6a6a6;
}

.item span {
    margin-left: -8px;
}

.qty {
    left: 341px;
    top: 29px;
    width: 39px;
    height: 12px;
    line-height: 11px;
    background-color: #ff0;
}

.qty span {
    margin-left: -1px;
}

.harga {
    left: 419px;
    top: 29px;
    width: 61px;
    height: 13px;
    line-height: 12px;
    background-color: #ff0;
}

.harga span {
    margin-left: -6px;
}

/* Selection handles */
.handle {
    position: absolute;
    width: 12px;
    height: 12px;
    margin: -6px 0 0 -6px;
    border: 1px solid #444;
    border-radius: 50%;
    background-color: #fff;
    z-index: 4;
}

.h-tl { left: -1px; top: -1px; }
.h-tc { left: 482px; top: -1px; }
.h-tr { left: 964px; top: -1px; }
.h-ml { left: -1px; top: 71px; }
.h-mr { left: 964px; top: 71px; }
.h-bl { left: -1px; top: 143px; }
.h-bc { left: 482px; top: 143px; }
.h-br { left: 964px; top: 143px; }

.rot-line {
    position: absolute;
    left: 482px;
    top: -19px;
    width: 1px;
    height: 14px;
    background-color: #444;
}

.rot-handle {
    position: absolute;
    left: 473px;
    top: -37px;
    width: 18px;
    height: 18px;
    border-radius: 50%;
    background-color: #444;
    display: flex;
    align-items: center;
    justify-content: center;
}
```
